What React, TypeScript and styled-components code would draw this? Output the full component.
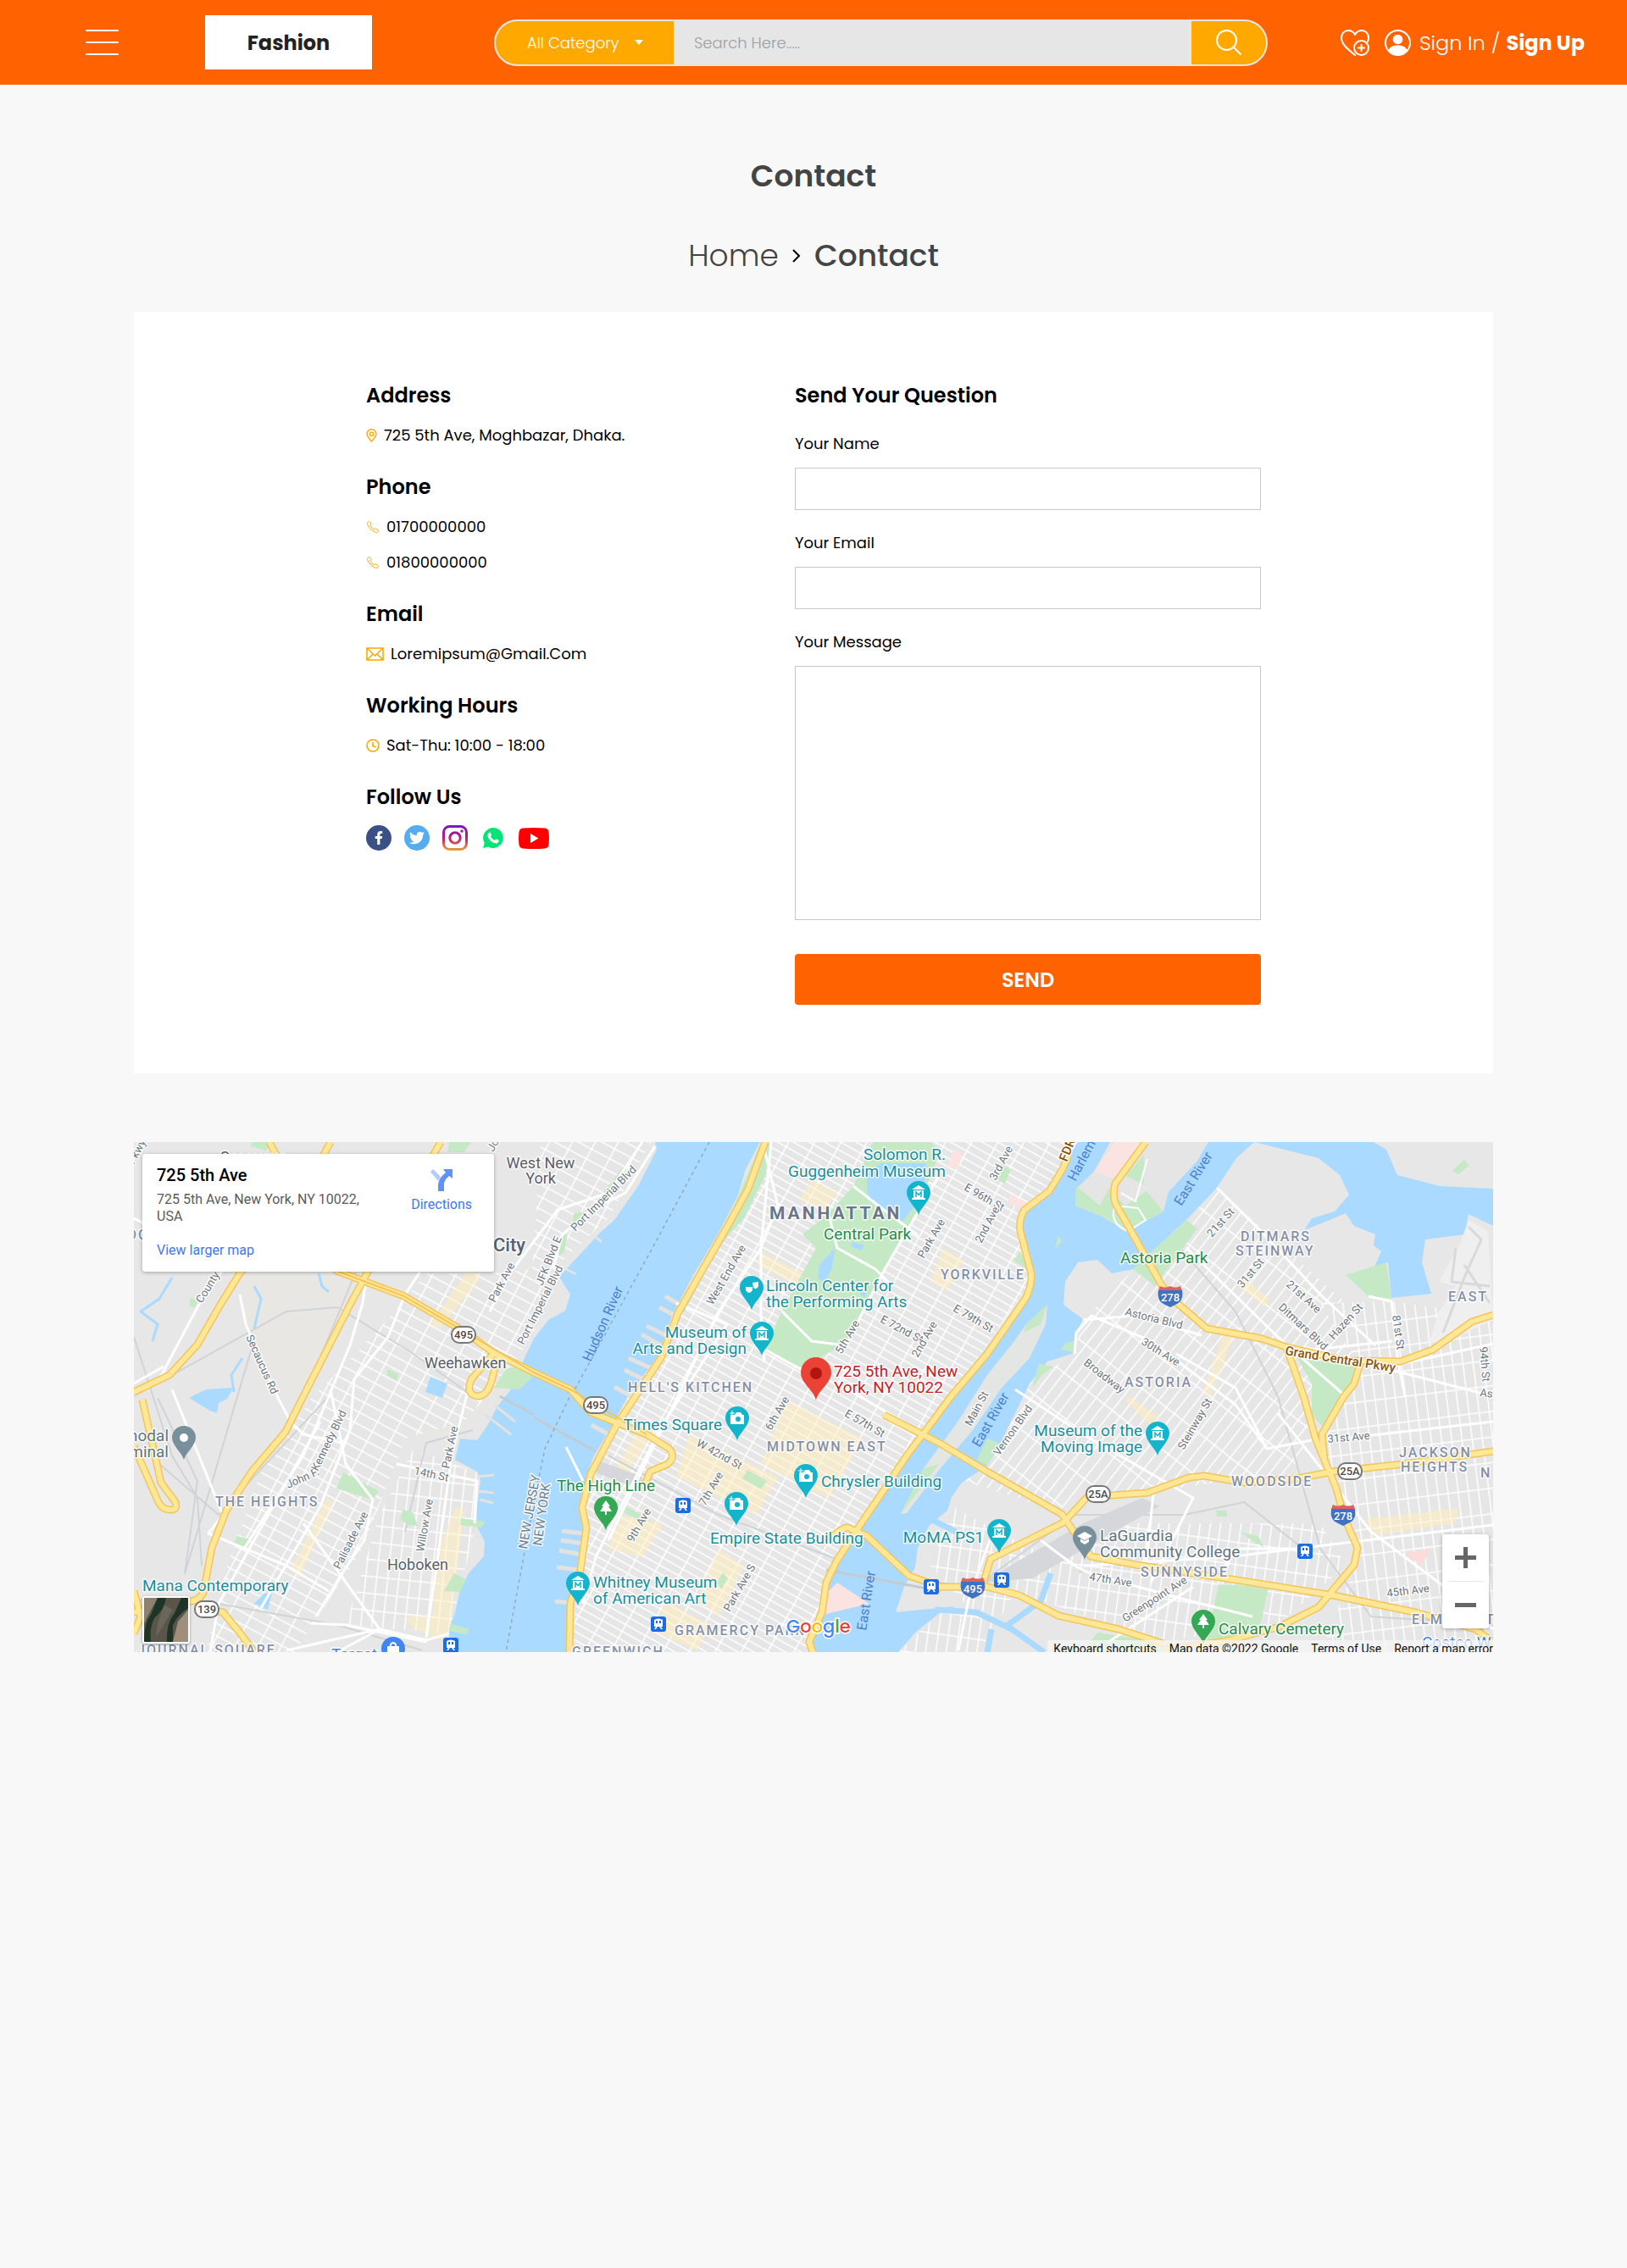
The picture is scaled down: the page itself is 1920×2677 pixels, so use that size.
import React from "react";
import styled, { createGlobalStyle } from "styled-components";
import { IoCallOutline } from "react-icons/io5";
import { FaFacebookF, FaTwitter } from "react-icons/fa";

const GlobalStyle = createGlobalStyle`
  *, *::before, *::after { box-sizing: border-box; }
  body {
    margin: 0;
    background: #f8f8f8;
    color: #000;
    font-family: Poppins, Inter, "Open Sans", sans-serif;
    font-size: 18px;
    line-height: 27px;
  }
  button, input, textarea, select { font: inherit; color: inherit; }
  a { color: inherit; text-decoration: none; }
`;

/* ---------- Header ---------- */

const Header = styled.header`
  display: flex;
  align-items: center;
  min-height: 100px;
  padding: 0 50px 0 101px;
  background: #ff6200;
  color: #fff;
`;

const MenuButton = styled.button`
  display: flex;
  flex-direction: column;
  gap: 12px;
  width: 39px;
  padding: 0;
  border: 0;
  background: none;
  cursor: pointer;
`;

const MenuBar = styled.span`
  height: 2px;
  border-radius: 1px;
  background: #fff;
`;

const Brand = styled.a`
  display: grid;
  place-items: center;
  width: 197px;
  height: 64px;
  margin-left: 102px;
  background: #fff;
  color: #222;
  font-size: 24px;
  font-weight: 700;
`;

const SearchBar = styled.form`
  display: flex;
  flex: 1;
  height: 55px;
  margin: 0 86px 0 144px;
  border: 2px solid #e6e6e6;
  border-radius: 28px;
  background: #e6e6e6;
  overflow: hidden;
`;

const CategoryBox = styled.div`
  position: relative;
  flex: 0 0 210px;
  background: #ffa800;
`;

const CategorySelect = styled.select`
  appearance: none;
  width: 100%;
  height: 100%;
  padding: 0 50px 0 37px;
  border: 0;
  background: none;
  color: #fff;
  font-weight: 300;
`;

const CategoryArrow = styled.svg`
  position: absolute;
  right: 36px;
  top: 22px;
  pointer-events: none;
`;

const SearchInput = styled.input`
  flex: 1;
  min-width: 0;
  padding: 0 24px;
  border: 0;
  outline: 0;
  background: none;
  font-weight: 300;
  &::placeholder { color: #9b9fa3; opacity: 1; }
`;

const SearchButton = styled.button`
  display: grid;
  place-items: center;
  flex: 0 0 88px;
  padding: 0;
  border: 0;
  background: #ffa800;
  cursor: pointer;
`;

const Account = styled.nav`
  display: flex;
  align-items: center;
  font-size: 24px;
  font-weight: 300;
  white-space: nowrap;
`;

const IconLink = styled.a`
  display: flex;
  margin-right: 18px;
`;

const SignLinks = styled.span`
  display: flex;
  gap: 7px;
`;

const SignUpLink = styled.a`
  font-weight: 700;
`;

const UserIcon = styled.svg`
  margin-right: 10px;
`;

/* ---------- Page heading ---------- */

const Main = styled.main`
  padding: 81px 158px;
`;

const Title = styled.h1`
  margin: 0 0 40px;
  color: #444;
  font-size: 36px;
  font-weight: 600;
  line-height: 54px;
  text-align: center;
`;

const Breadcrumb = styled.nav`
  display: flex;
  justify-content: center;
  align-items: center;
  gap: 16px;
  margin-bottom: 39px;
  color: #444;
  font-size: 36px;
  font-weight: 500;
  line-height: 54px;
`;

const HomeLink = styled.a`
  font-weight: 300;
`;

/* ---------- Contact card ---------- */

const Card = styled.section`
  display: grid;
  grid-template-columns: minmax(0, 1fr) 550px;
  padding: 81px 274px;
  background: #fff;
`;

const Details = styled.div`
  display: flex;
  flex-direction: column;
  gap: 30px;
`;

const Group = styled.section`
  display: flex;
  flex-direction: column;
  gap: 15px;
`;

const GroupTitle = styled.h2`
  margin: 0;
  font-size: 24px;
  font-weight: 600;
  line-height: 36px;
`;

const DetailRow = styled.div`
  display: flex;
  align-items: center;
  gap: 8px;
  svg { flex: none; color: #ffa800; }
`;

const Socials = styled.div`
  display: flex;
  align-items: center;
  gap: 15px;
`;

const SocialLink = styled.a<{ $fill?: string; $width?: number }>`
  display: grid;
  place-items: center;
  width: ${(p) => p.$width ?? 30}px;
  height: 30px;
  border-radius: ${(p) => (p.$fill ? "50%" : "0")};
  background: ${(p) => p.$fill ?? "transparent"};
  color: #fff;
`;

const QuestionForm = styled.form`
  display: flex;
  flex-direction: column;
`;

const Field = styled.div`
  display: flex;
  flex-direction: column;
  gap: 15px;
  margin-top: 25px;
`;

const inputBox = `
  width: 100%;
  border: 1px solid #c9c9c9;
  border-radius: 0;
  background: #fff;
  padding: 10px 15px;
  outline: 0;
`;

const TextInput = styled.input`
  ${inputBox}
  height: 50px;
`;

const MessageInput = styled.textarea`
  ${inputBox}
  display: block;
  height: 300px;
  resize: none;
`;

const SendButton = styled.button`
  height: 60px;
  margin-top: 40px;
  border: 0;
  border-radius: 4px;
  background: #ff6200;
  color: #fff;
  font-size: 24px;
  font-weight: 600;
  cursor: pointer;
`;

/* ---------- Map ---------- */

const MapFrame = styled.section`
  position: relative;
  margin-top: 81px;
  aspect-ratio: 1604 / 602;
  overflow: hidden;
  background: #e8e8e8;
  font-family: Roboto, sans-serif;
`;

const MapCanvas = styled.svg`
  display: block;
  width: 100%;
  height: 100%;
`;

const InfoCard = styled.div`
  position: absolute;
  left: 10px;
  top: 14px;
  display: flex;
  justify-content: space-between;
  width: 415px;
  height: 139px;
  padding: 14px 26px 14px 17px;
  border-radius: 3px;
  background: #fff;
  box-shadow: 0 1px 4px rgba(0, 0, 0, 0.3);
  color: #5b5b5b;
  font-size: 16px;
  line-height: 20px;
`;

const InfoText = styled.div`
  display: flex;
  flex-direction: column;
  align-items: flex-start;
  width: 260px;
`;

const InfoTitle = styled.strong`
  margin-bottom: 8px;
  color: #000;
  font-size: 20px;
  font-weight: 500;
  line-height: 22px;
`;

const MapLink = styled.a`
  color: #3c78f0;
`;

const LargerMapLink = styled(MapLink)`
  margin-top: 20px;
`;

const DirectionsLink = styled(MapLink)`
  display: flex;
  flex-direction: column;
  align-items: center;
  gap: 6px;
  padding-top: 4px;
`;

const ZoomControl = styled.div`
  position: absolute;
  right: 5px;
  bottom: 28px;
  display: flex;
  flex-direction: column;
  width: 55px;
  padding: 0 7px;
  border-radius: 3px;
  background: #fff;
  box-shadow: 0 1px 4px rgba(0, 0, 0, 0.3);
`;

const ZoomButton = styled.button`
  display: grid;
  place-items: center;
  height: 55px;
  padding: 0;
  border: 0;
  background: none;
  cursor: pointer;
  & + & { border-top: 1px solid #e6e6e6; height: 56px; }
`;

const Thumbnail = styled.button`
  position: absolute;
  left: 10px;
  bottom: 10px;
  display: flex;
  width: 56px;
  height: 56px;
  padding: 0;
  border: 2px solid #fff;
  border-radius: 3px;
  box-shadow: 0 1px 3px rgba(0, 0, 0, 0.4);
  overflow: hidden;
`;

const Attribution = styled.footer`
  position: absolute;
  right: 0;
  bottom: 0;
  display: flex;
  gap: 15px;
  height: 14px;
  padding-left: 7px;
  background: rgba(245, 245, 245, 0.75);
  color: #111;
  font-size: 14px;
  line-height: 20px;
  white-space: nowrap;
  overflow: hidden;
`;

type LabelKind = "poi" | "park" | "town" | "city" | "area" | "borough" | "road" | "route" | "water" | "state" | "slate" | "shop" | "place";

const labelLook: Record<LabelKind, string> = {
  poi: "font-size: 19px; fill: #1a8f9c;",
  park: "font-size: 19px; fill: #258c4a;",
  town: "font-size: 18px; fill: #59616b;",
  city: "font-size: 22px; font-weight: 500; fill: #59616b;",
  area: "font-size: 16px; font-weight: 500; letter-spacing: 2px; fill: #8590a8;",
  borough: "font-size: 21px; font-weight: 700; letter-spacing: 3px; fill: #6a7688;",
  road: "font-size: 13px; fill: #6e767e;",
  route: "font-size: 15px; font-weight: 500; fill: #87560d;",
  water: "font-size: 16px; fill: #4c7fcf; stroke: none;",
  state: "font-size: 15px; fill: #6e7d92;",
  slate: "font-size: 19px; fill: #60757f;",
  shop: "font-size: 19px; fill: #3d83e6;",
  place: "font-size: 19px; fill: #c5221f;",
};

const MapText = styled.text<{ $kind: LabelKind }>`
  paint-order: stroke;
  stroke: rgba(255, 255, 255, 0.85);
  stroke-width: 3px;
  stroke-linejoin: round;
  ${(p) => labelLook[p.$kind]}
`;

const ShieldText = styled.text<{ $light?: boolean }>`
  font-size: 13px;
  font-weight: 500;
  text-anchor: middle;
  fill: ${(p) => (p.$light ? "#fff" : "#4a4a4a")};
`;

const GoogleMark = styled.text`
  font-family: Poppins, Inter, sans-serif;
  font-size: 21px;
  font-weight: 500;
  paint-order: stroke;
  stroke: #fff;
  stroke-width: 3px;
`;

type Label = [LabelKind, number, number, string, number?, ("end" | "middle")?];

const labels: Label[] = [
  ["area", -8, 115, "OC"], ["town", 102, 24, "Secaucus"],
  ["town", 480, 31, "West New", 0, "middle"], ["town", 480, 49, "York", 0, "middle"],
  ["city", 424, 129, "City"], ["town", 343, 267, "Weehawken"], ["town", 299, 505, "Hoboken"],
  ["slate", 41, 353, "modal", 0, "end"], ["slate", 41, 372, "Terminal", 0, "end"],
  ["area", 96, 430, "THE HEIGHTS"], ["area", 4, 605, "JOURNAL SQUARE"],
  ["poi", 10, 530, "Mana Contemporary"], ["shop", 233, 611, "Target"],
  ["poi", 958, 21, "Solomon R.", 0, "end"], ["poi", 958, 41, "Guggenheim Museum", 0, "end"],
  ["borough", 750, 91, "MANHATTAN"], ["park", 814, 115, "Central Park"],
  ["poi", 746, 176, "Lincoln Center for"], ["poi", 746, 195, "the Performing Arts"],
  ["poi", 723, 231, "Museum of", 0, "end"], ["poi", 723, 250, "Arts and Design", 0, "end"],
  ["area", 583, 295, "HELL'S KITCHEN"], ["area", 747, 365, "MIDTOWN EAST"],
  ["area", 638, 582, "GRAMERCY PARK"], ["area", 517, 607, "GREENWICH"],
  ["poi", 694, 340, "Times Square", 0, "end"], ["park", 499, 412, "The High Line"],
  ["poi", 811, 407, "Chrysler Building"], ["poi", 680, 474, "Empire State Building"],
  ["poi", 542, 526, "Whitney Museum"], ["poi", 542, 545, "of American Art"],
  ["poi", 1003, 473, "MoMA PS1", 0, "end"],
  ["poi", 1190, 347, "Museum of the", 0, "end"], ["poi", 1190, 366, "Moving Image", 0, "end"],
  ["slate", 1140, 471, "LaGuardia"], ["slate", 1140, 490, "Community College"],
  ["park", 1280, 581, "Calvary Cemetery"], ["park", 1164, 143, "Astoria Park"],
  ["area", 952, 162, "YORKVILLE"], ["area", 1306, 117, "DITMARS"], ["area", 1300, 134, "STEINWAY"],
  ["area", 1551, 188, "EAST"], ["area", 1169, 289, "ASTORIA"], ["area", 1295, 406, "WOODSIDE"],
  ["area", 1493, 372, "JACKSON"], ["area", 1495, 389, "HEIGHTS"], ["area", 1589, 396, "N"],
  ["area", 1188, 513, "SUNNYSIDE"], ["area", 1508, 569, "ELMHURST"], ["shop", 1520, 597, "Costco W"],
  ["road", 0, 27, "Pkwy", -62], ["road", 132, 230, "Secaucus Rd", 66], ["road", 80, 191, "County Ave", -58],
  ["road", 424, 12, "John", -60],
  ["road", 426, 190, "Park Ave", -62], ["road", 460, 240, "Port Imperial Blvd", -63],
  ["road", 482, 170, "JFK Blvd E", -68], ["road", 521, 106, "Port Imperial Blvd", -45],
  ["road", 683, 193, "West End Ave", -60], ["road", 835, 251, "5th Ave", -60],
  ["road", 880, 212, "E 72nd St", 28], ["road", 925, 255, "2nd Ave", -60], ["road", 932, 138, "Park Ave", -60],
  ["road", 1017, 46, "3rd Ave", -62], ["road", 979, 56, "E 96th St", 30], ["road", 1000, 120, "2nd Ave", -62],
  ["road", 966, 199, "E 79th St", 30], ["road", 1272, 113, "21st St", -48], ["road", 1308, 173, "31st St", -50],
  ["road", 1359, 169, "21st Ave", 42], ["road", 1350, 196, "Ditmars Blvd", 43], ["road", 1416, 234, "Hazen St", -48],
  ["road", 1485, 205, "81st St", 82], ["road", 1588, 242, "94th St", 85], ["road", 1169, 204, "Astoria Blvd", 14],
  ["road", 1188, 238, "30th Ave", 32], ["road", 1120, 262, "Broadway", 38], ["road", 988, 336, "Main St", -62],
  ["road", 1021, 371, "Vernon Blvd", -55], ["road", 1239, 364, "Steinway St", -60], ["road", 1409, 355, "31st Ave", -5],
  ["road", 1127, 517, "47th Ave", 9], ["road", 1170, 567, "Greenpoint Ave", -33], ["road", 1479, 537, "45th Ave", -7],
  ["road", 1588, 300, "Ast", 6], ["road", 752, 341, "6th Ave", -60], ["road", 838, 323, "E 57th St", 30],
  ["road", 663, 358, "W 42nd St", 29], ["road", 674, 430, "7th Ave", -60], ["road", 589, 473, "9th Ave", -60],
  ["road", 703, 555, "Park Ave S", -60], ["road", 182, 409, "John F.", -24], ["road", 217, 389, "Kennedy Blvd", -64],
  ["road", 372, 386, "Park Ave", -78], ["road", 330, 392, "14th St", 12], ["road", 342, 484, "Willow Ave", -80],
  ["road", 243, 505, "Palisade Ave", -63],
  ["route", 1101, 24, "FDR", -68], ["route", 1358, 251, "Grand Central Pkwy", 9],
  ["water", 539, 260, "Hudson River", -66], ["water", 1111, 47, "Harlem R", -62], ["water", 1236, 76, "East River", -58],
  ["water", 998, 361, "East River", -60], ["water", 864, 577, "East River", -81],
  ["state", 464, 481, "NEW JERSEY", -80], ["state", 481, 477, "NEW YORK", -82],
  ["place", 826, 277, "725 5th Ave, New"], ["place", 826, 296, "York, NY 10022"],
];

const highways = [
  "M0 295 L42 275 L75 239 L102 192 L125 155 L200 60 L232 0",
  "M362 0 L275 155 L255 192 L199 302 L179 342 L139 389 L109 435 L92 479 L82 532 Q75 545 55 542 L25 552 L0 555",
  "M160 0 L239 152 L319 182 L392 225 L425 249 L472 272 L515 292 L539 319 L605 345 L632 362 Q640 372 630 380 L609 389 L604 402",
  "M425 249 L399 279 Q390 297 405 300 Q417 300 422 282 L430 252",
  "M745 0 L725 55 L699 102 L672 149 L642 202 L622 255 L592 300 L569 335 L539 392 L529 432 L534 455 L527 505 L515 545 L514 602",
  "M1103 15 L1096 32 L1080 58 L1051 80 Q1044 92 1046 105 L1059 155 Q1060 170 1052 185 L1007 250 L963 302 L935 340 L912 370 L889 405 L855 455 L829 495 L817 520 L812 555 L797 590 L801 602",
  "M1194 0 L1158 49 Q1155 60 1158 72 L1213 169 L1230 189 L1266 220 L1331 232 L1360 242 L1430 258 L1495 259 L1533 245 L1579 212 L1604 204",
  "M1360 242 L1381 302 L1394 349 L1419 409 L1428 442 L1444 479 L1440 499 L1398 549 L1352 572 L1289 589 L1213 600",
  "M1447 262 L1440 285 L1428 300 L1402 345 L1405 375",
  "M820 470 Q835 455 842 455 L865 465 L915 512 L952 525 L1007 525 L1045 535 L1091 559 L1162 575 L1215 592",
  "M885 322 L952 356 L1007 389 L1095 439 L1129 489 L1183 499 L1289 515 L1415 535 L1512 555 L1583 575 L1604 590",
  "M1002 522 L1011 492 L1097 449 L1125 419 L1196 414 L1245 396 L1263 394 L1310 402 L1373 397 L1415 389 L1499 380 L1604 365",
  "M10 304 L32 402 L49 425 Q52 435 42 434 Q34 434 29 425 L0 359",
  "M75 549 L105 555 L125 579 L142 602",
  "M0 530 L8 560 L0 580",
];

const streets = [
  "M742 0 L760 75 L740 125 L740 205 L744 260", "M752 0 L740 125 L690 200 L560 470",
  "M785 267 L840 290 L890 320", "M745 245 L785 267", "M840 240 L885 152 L950 40",
  "M849 52 L885 80 L925 110", "M820 85 L830 125 L875 150 L890 165", "M765 200 L800 235 L839 240",
  "M1278 54 L1330 105 L1400 180 L1465 240", "M1242 125 L1350 230 L1430 300", "M1120 210 L1180 205 L1260 228",
  "M1110 250 L1112 225 L1130 205 L1200 235 L1300 310 L1337 362 L1390 352",
  "M1040 292 L1120 345 L1250 420 L1200 520", "M1337 362 L1300 290 L1230 250", "M1350 320 L1460 460 L1540 520 L1604 575",
  "M1120 500 L1290 490 L1604 452", "M1070 470 L1110 500 L1130 510 L1240 540 L1320 560", "M1425 350 L1604 330",
  "M1457 182 L1484 188 L1492 260 L1500 300", "M1392 245 L1485 235 M1495 262 L1604 238", "M1380 242 L1604 300",
  "M1250 525 L1150 590", "M1204 405 L1195 495", "M973 600 L985 540 L1010 470", "M1280 520 L1300 480 L1370 480",
  "M30 280 L75 195 L105 150 L60 120 L0 90", "M125 180 L132 215 L170 302 L185 330 L200 345 L245 355",
  "M45 292 L105 440 L88 462 L180 500 L230 530", "M232 292 L250 380 L282 422 L272 470 L245 510 L215 560",
  "M275 155 L270 190 L255 240 L230 300 L200 370 L130 480", "M425 20 L320 180 L300 230 L260 280 L255 340 L220 430 L150 550",
  "M395 290 L375 370 L360 480 L345 585", "M310 380 L405 400 L402 450", "M200 450 L290 575 L180 600", "M345 590 L250 570 L210 568",
  "M240 602 L290 575 L345 588 L372 580", "M600 0 L560 60 L500 80 L440 160 L420 200", "M615 5 L580 60 L540 80 L505 110 L495 150",
  "M0 285 L35 265", "M90 602 L100 545 L220 330", "M510 360 L530 400", "M640 190 L700 215 L620 340 L545 490 L530 545",
];

type PinIcon = "museum" | "camera" | "tree" | "mask" | "cap" | "dot";
const pins: [number, number, string, PinIcon][] = [
  [926, 86, "#12b5cb", "museum"], [729, 198, "#12b5cb", "mask"], [741, 252, "#12b5cb", "museum"],
  [712, 352, "#12b5cb", "camera"], [793, 420, "#12b5cb", "camera"], [711, 453, "#12b5cb", "camera"],
  [557, 458, "#34a853", "tree"], [524, 547, "#12b5cb", "museum"], [1021, 485, "#12b5cb", "museum"],
  [1208, 370, "#12b5cb", "museum"], [1122, 493, "#78909c", "cap"], [1262, 592, "#34a853", "tree"],
  [59, 375, "#78909c", "dot"],
];

const pinGlyphs: Record<PinIcon, React.ReactNode> = {
  museum: <g><path d="M-8 -30 L0 -35 L8 -30 Z M-6 -29 H6 V-20 H-6 Z M-8 -20 H8 V-18 H-8 Z" fill="#fff" /><path d="M-3 -21 V-27 L0 -23.5 L3 -27 V-21" fill="none" stroke="#12b5cb" strokeWidth="1.5" /></g>,
  camera: <g><path d="M-8 -30 H-3 L-1 -33 H4 L6 -30 H8 V-19 H-8 Z" fill="#fff" /><circle cx="1" cy="-25" r="3" fill="#12b5cb" /><path d="M-6 -35 V-29 M-9 -32 H-3" stroke="#fff" strokeWidth="1" /></g>,
  tree: <path d="M0 -35 L5 -28 H3 L7 -22 H1 V-18 H-1 V-22 H-7 L-3 -28 H-5 Z" fill="#fff" />,
  mask: <g fill="#fff"><path d="M-7 -27 H1 V-23 Q-3 -17 -7 -23 Z" /><path d="M1 -32 L8 -33 V-28 Q6 -23 2 -26 Z" /></g>,
  cap: <g fill="#fff"><path d="M-9 -28 L0 -33 L9 -28 L0 -23 Z" /><path d="M-5 -25 L0 -22 L5 -25 V-21 L0 -18 L-5 -21 Z" /></g>,
  dot: <circle cx="0" cy="-26" r="5" fill="#fff" />,
};

const stateShields: [number, number, string][] = [
  [389, 228, "495"], [545, 311, "495"], [86, 552, "139"], [1138, 416, "25A"], [1435, 389, "25A"],
];
const interstates: [number, number, string][] = [[1223, 182, "278"], [1427, 440, "278"], [990, 526, "495"]];
const stations: [number, number][] = [[648, 429], [619, 569], [941, 525], [1382, 483], [1024, 517], [374, 594]];

const grids: { id: string; angle: number; w: number; h: number }[] = [
  { id: "manhattan", angle: 29, w: 27, h: 9 },
  { id: "heights", angle: 28, w: 24, h: 13 },
  { id: "hoboken", angle: 6, w: 13, h: 20 },
  { id: "astoria", angle: 38, w: 12, h: 42 },
  { id: "queens", angle: -7, w: 12, h: 30 },
  { id: "sunnyside", angle: 8, w: 12, h: 26 },
];

const gridAreas: [string, string][] = [
  ["manhattan", "M752 0 H1114 L1078 59 L1048 85 L1059 165 L963 302 L889 402 L817 519 L800 602 H514 L534 455 L529 425 L582 302 L640 205 L712 80 Z"],
  ["heights", "M345 155 H425 L470 150 L480 0 H610 L560 90 L505 140 L470 230 L425 290 L390 330 L320 350 L270 480 L190 602 H85 L110 500 L150 390 L210 302 L290 220 Z"],
  ["hoboken", "M330 362 L405 390 L404 452 L372 580 L250 570 L290 440 Z"],
  ["astoria", "M1278 54 L1430 190 L1480 240 L1400 300 L1370 390 L1200 412 L1125 415 L1090 435 L980 400 L1021 359 L1057 285 L1110 249 L1120 209 L1180 150 Z"],
  ["queens", "M1400 190 L1484 188 L1604 205 V602 H1400 L1450 480 L1394 349 L1447 265 Z"],
  ["sunnyside", "M965 430 L1060 480 L1180 450 H1400 L1430 500 L1350 570 L1210 590 L1040 530 L1000 602 H902 L952 555 H990 L940 500 Z"],
];

const parks = [
  "M872 0 H940 L952 10 L919 95 L885 152 L839 239 L785 267 L745 245 L762 205 L805 125 L789 109 L819 85 L849 52 Z",
  "M752 0 L745 40 L720 90 L700 112 L680 140 L650 200 L640 200 L700 95 L740 0 Z",
  "M1242 92 L1255 102 L1205 170 L1179 150 Z", "M1430 157 L1478 142 L1484 185 L1457 182 Z",
  "M1373 255 L1447 265 L1428 302 L1402 335 L1390 322 L1390 285 Z", "M1280 522 L1339 525 L1327 582 L1266 589 Z",
  "M1137 579 L1204 589 L1213 602 H1120 Z", "M439 268 L460 263 L470 278 L455 292 L425 290 Z",
  "M247 390 L289 412 L282 422 L239 409 Z", "M122 465 L137 469 L132 482 L117 475 Z",
  "M317 434 L329 437 L335 453 L324 452 L315 446 Z", "M378 509 L392 516 L385 531 L366 530 Z", "M374 568 L395 575 L393 581 L372 577 Z",
  "M386 444 L415 448 L410 455 L385 452 Z", "M1021 26 L1035 32 L1028 49 L1019 44 Z", "M724 387 L747 400 L740 410 L718 397 Z",
  "M580 430 L600 440 L595 446 L578 437 Z", "M695 508 L701 515 L693 528 L688 520 Z", "M140 0 H165 L155 10 L138 5 Z",
  "M372 0 H398 L390 12 H370 Z", "M577 30 L582 32 L560 60 L552 62 Z", "M504 110 L512 108 L508 130 L500 135 Z",
  "M519 85 L530 82 L526 92 L518 95 Z", "M1570 20 L1575 28 L1563 38 L1556 34 Z", "M1305 460 L1327 465 L1333 478 L1322 472 Z",
  "M1277 435 H1290 V442 H1278 Z", "M1112 500 L1122 504 L1117 510 Z", "M66 183 L75 187 L72 196 L66 193 Z",
  "M1045 130 L1057 140 L1058 152 L1038 140 Z", "M1085 265 L1072 275 L1060 290 L1068 262 Z", "M1100 237 L1110 235 L1110 248 L1094 245 Z",
  "M300 268 L312 274 L310 282 L298 275 Z", "M1007 350 L1021 356 L1007 382 L995 375 Z",
];

const commercial = [
  "M800 45 L830 60 L815 80 L785 68 Z", "M740 130 L790 155 L785 170 L735 145 Z", "M655 345 L760 395 L735 440 L640 395 Z",
  "M770 305 L860 350 L820 420 L740 380 Z", "M560 400 L600 330 L615 340 L570 410 Z", "M690 480 L720 500 L690 560 L665 540 Z",
  "M360 480 L380 430 L390 435 L370 590 L330 575 L320 560 L352 560 Z", "M228 420 L235 425 L195 515 L185 505 Z",
  "M395 150 L410 160 L360 220 L350 215 Z", "M1455 445 L1563 432 L1560 450 L1460 465 Z", "M1287 222 L1298 228 L1290 250 L1270 300 L1262 295 Z",
  "M955 125 L980 140 L960 175 L940 165 Z", "M570 440 L625 450 L600 490 L560 480 Z", "M1310 160 L1340 185 L1335 195 L1305 172 Z",
  "M1175 300 L1210 325 L1200 335 L1170 305 Z", "M625 540 L680 570 L665 600 L620 580 Z",
];

function ManhattanMap() {
  return (
    <MapCanvas viewBox="0 0 1604 602" preserveAspectRatio="xMidYMid slice" role="img" aria-label="Map of New York around 725 5th Ave">
      <defs>
        {grids.map((g) => (
          <pattern key={g.id} id={g.id} width={g.w} height={g.h} patternUnits="userSpaceOnUse" patternTransform={`rotate(${g.angle})`}>
            <rect width={g.w} height={g.h} fill="#e6e6e7" />
            <path d={`M0 0 H${g.w} M0 0 V${g.h}`} stroke="#fff" strokeWidth="3" />
          </pattern>
        ))}
      </defs>
      <rect width="1604" height="602" fill="#e7e7e7" />
      <path d="M125 155 H250 L265 190 L190 302 L150 295 L132 215 Z M430 300 L385 345 L340 350 L300 330 L320 200 L420 190 L440 270 Z" fill="#e9e7e3" />
      {gridAreas.map(([id, d]) => <path key={id} d={d} fill={`url(#${id})`} />)}
      {commercial.map((d) => <path key={d} d={d} fill="#ffedb8" opacity="0.5" />)}
      <g fill="none" stroke="#d0d3d7" strokeWidth="2">
        <path d="M0 230 L45 370 L75 420 L80 500 M28 302 L75 400 L60 510 L140 240 M200 302 L280 110 M0 300 L180 200 L240 195 L330 250 L400 300" />
        <path d="M30 380 L100 440 L230 300 M320 460 L345 355 L400 340 M0 540 L100 545 L240 570 L340 600 M560 370 L690 440 L850 500 L1000 530" />
        <path d="M1195 0 L1200 80 L1230 120 L1300 200 L1350 300 L1400 480 L1460 560 L1604 570 M1000 520 L1110 440 L1240 440 L1310 425 L1380 480" />
      </g>
      <path d="M1000 520 L1120 450 L1190 420 L1210 430 L1060 515 Z M545 375 L600 395 L600 412 L545 390 Z" fill="#d5d7da" />
      <g fill="#aadaff">
        <path d="M615 0 L617 9 L595 52 L567 92 L550 107 L515 145 L502 159 L515 180 L509 199 L489 210 L472 232 L460 257 L445 292 L429 312 L417 335 L405 352 L385 350 L379 375 L405 389 L409 399 L405 429 L404 452 L414 472 L413 489 L395 509 L385 529 L379 555 L372 575 V602 H511 L514 549 L525 509 L530 465 L527 425 L534 395 L542 372 L560 342 L582 302 L619 252 L635 205 L659 159 L689 109 L712 65 L722 32 L739 0 Z" />
        <path d="M1114 0 L1099 22 L1078 59 L1051 79 L1045 102 L1059 155 L1053 179 L1007 242 L965 302 L932 342 L889 402 L855 455 L829 492 L817 519 L812 559 L800 589 L805 602 H902 L922 579 L952 555 L970 548 L899 555 L909 525 L922 502 L925 479 L939 452 L960 435 L965 419 L977 402 L1007 382 L1021 359 L1057 285 L1078 259 L1110 249 L1112 225 L1120 209 L1097 192 L1099 165 L1114 142 L1137 139 L1154 155 L1179 150 L1242 92 L1278 54 L1301 19 L1322 0 Z" />
        <path d="M1318 0 L1322 0 L1398 19 L1423 39 L1434 62 L1417 82 L1390 90 L1381 104 L1411 92 L1430 84 L1440 99 L1465 109 L1463 122 L1472 129 L1463 150 L1480 142 L1484 184 L1531 179 L1520 142 L1524 115 L1571 109 L1575 85 L1604 99 V55 L1541 52 L1491 39 L1478 9 L1463 0 Z" />
        <path d="M350 277 L370 285 L364 302 L344 295 Z M153 533 L163 532 L158 552 L142 545 Z M65 302 L85 292 L118 290 L110 303 L100 308 L98 320 L88 316 Z" />
      </g>
      {parks.map((d) => <path key={d} d={d} fill="#c6e9c5" />)}
      <g fill="#aadaff">
        <path d="M865 35 L882 25 L935 25 L932 65 L905 95 L872 72 L865 59 Z" />
        <path d="M827 125 L824 149 L815 167 L807 160 L809 145 Z M848 118 L862 122 L858 128 L846 123 Z M856 178 L866 175 L862 184 Z" />
      </g>
      <g fill="none" stroke="#aadaff" strokeWidth="7" strokeLinejoin="round">
        <path d="M945 552 L994 555 L1036 575 L1074 602 M1030 571 L1070 542 L1082 509" />
        <path d="M1007 602 L1012 575 M940 445 L970 460" />
        <path d="M142 170 L150 185 L142 220 M128 255 L115 275 L118 295 M45 160 L30 185 L8 200 L28 215 L22 235 M218 155 L222 170 L230 177" strokeWidth="3" />
      </g>
      <path d="M1152 0 L1133 35 L1112 55 L1111 75 L1141 87 L1171 105 L1196 92 L1215 82 L1221 59 L1255 22 L1268 0 Z" fill="#e5e5e6" />
      <path d="M1112 52 L1140 75 L1150 55 L1170 75 L1195 58 L1215 82 L1171 105 L1141 87 L1111 75 Z M1170 40 L1192 15 V50 Z" fill="#c6e9c5" />
      <path d="M1158 0 H1190 L1162 45 L1133 35 Z M1035 62 L1060 75 L1052 80 L1030 72 Z M968 8 L978 15 L972 32 L960 28 Z M868 545 L812 558 L810 540 L830 520 Z" fill="#fbe3e1" />
      <path d="M1500 485 L1530 480 L1520 500 Z" fill="#fbdcda" />
      <path d="M1158 75 Q1150 95 1172 105 M1158 75 L1185 78 L1194 92 L1174 105 M1165 60 L1182 70 L1196 20" fill="none" stroke="#fff" strokeWidth="2" />
      <path d="M1078 192 L1053 215 L1036 239 L1007 275 L973 329 L932 385 L905 439 L912 438 L952 385 L990 340 L1024 290 L1057 255 L1076 215 Z" fill="#e4e6e4" />
      <path d="M1078 192 L1053 215 L1050 225 L1070 215 Z M932 385 L905 439 L950 380 Z M1091 110 L1095 118 L1087 125 Z" fill="#c6e9c5" />
      <path d="M1575 92 L1598 105 L1604 210 L1560 230 L1528 238 L1540 200 L1560 170 L1540 165 L1565 120 Z" fill="#efeff0" />
      <g fill="none" stroke="#d9d9db" strokeWidth="3"><path d="M1575 100 L1590 115 L1570 160 L1545 225 M1560 125 L1555 165 L1600 170 M1570 145 L1600 190" /></g>
      <g stroke="#e3e2df" strokeWidth="5">
        <path d="M567 289 L585 299 M579 269 L605 282 M584 255 L615 269 M599 227 L622 240 M605 217 L632 230 M620 195 L639 205 M627 182 L644 192" />
        <path d="M505 459 L530 462 M504 470 L530 474 M502 482 L529 487 M499 502 L526 505 M497 542 L514 544 M540 334 L562 346" />
        <path d="M545 112 L552 118 M510 150 L522 156 M405 395 L425 393 M405 412 L425 414 M408 422 L424 426 M425 310 L450 330 M415 322 L445 345" strokeWidth="3" />
      </g>
      <path d="M472 325 L545 365 M432 300 L472 322 M817 505 L952 530" stroke="#c3cbd2" strokeWidth="3" fill="none" />
      <path d="M679 0 L619 112 L522 289 L515 299 L485 362 L472 425 L439 602" fill="none" stroke="#8faac0" strokeWidth="1.5" strokeDasharray="4 4" />
      <g fill="none" stroke="#fff" strokeWidth="3" strokeLinejoin="round">
        {streets.map((d) => <path key={d} d={d} />)}
      </g>
      <g fill="none" strokeLinejoin="round">
        {highways.map((d) => <path key={d} d={d} stroke="#f2c55c" strokeWidth="9" />)}
        {highways.map((d) => <path key={d} d={d} stroke="#ffe795" strokeWidth="6" />)}
        <path d="M239 152 L319 182 L392 225 L472 272 L515 292 L605 345" stroke="#f2c55c" strokeWidth="2" />
      </g>

      {labels.map(([kind, x, y, text, angle = 0, anchor]) => (
        <MapText key={`${text}${x}${y}`} $kind={kind} textAnchor={anchor} transform={`translate(${x} ${y}) rotate(${angle})`}>{text}</MapText>
      ))}

      {stateShields.map(([x, y, text]) => (
        <g key={`${x}`} transform={`translate(${x} ${y})`}>
          <rect x="-14" y="-10" width="28" height="19" rx="9" fill="#fff" stroke="#777" strokeWidth="2" />
          <ShieldText y="4">{text}</ShieldText>
        </g>
      ))}
      {interstates.map(([x, y, text]) => (
        <g key={`${x}`} transform={`translate(${x} ${y})`}>
          <path d="M-14 -7 H14 Q16 5 8 9 L0 13 L-8 9 Q-16 5 -14 -7 Z" fill="#3f72c4" />
          <path d="M-14 -7 L-12 -12 Q-6 -9 0 -12 Q6 -9 12 -12 L14 -7 Z" fill="#e0605c" />
          <ShieldText $light y="6">{text}</ShieldText>
        </g>
      ))}
      {stations.map(([x, y]) => (
        <g key={`${x}`} transform={`translate(${x} ${y})`}>
          <rect x="-9" y="-9" width="18" height="18" rx="3" fill="#1a6ce8" />
          <path d="M-5 -5 Q0 -8 5 -5 V3 H3 L5 6 H3 L1 3 H-1 L-3 6 H-5 L-3 3 H-5 Z" fill="#fff" />
          <path d="M-3 -4 H-1 V-1 H-3 Z M1 -4 H3 V-1 H1 Z" fill="#1a6ce8" />
        </g>
      ))}
      {pins.map(([x, y, color, icon]) => (
        <g key={`${x}${y}`} transform={`translate(${x} ${y})`}>
          <path d="M0 0 C-2 -8 -14 -17 -14 -26 A14 14 0 0 1 14 -26 C14 -17 2 -8 0 0 Z" fill={color} />
          {pinGlyphs[icon]}
        </g>
      ))}
      <g transform="translate(306 598)">
        <circle r="14" fill="#4285f4" />
        <path d="M-7 -3 H7 V8 H-7 Z" fill="#fff" />
        <path d="M-3 -1 V-5 Q0 -9 3 -5 V-1" fill="none" stroke="#fff" strokeWidth="2" />
      </g>
      <g transform="translate(805 305)">
        <path d="M0 0 C-2 -12 -18 -20 -18 -33 A18 18 0 0 1 18 -33 C18 -20 2 -12 0 0 Z" fill="#ea4335" />
        <circle cy="-32" r="7" fill="#b31412" />
      </g>
      <GoogleMark x="770" y="579">
        <tspan fill="#4285f4">G</tspan><tspan fill="#ea4335">o</tspan><tspan fill="#fbbc04">o</tspan><tspan fill="#4285f4">g</tspan><tspan fill="#34a853">l</tspan><tspan fill="#ea4335">e</tspan>
      </GoogleMark>
    </MapCanvas>
  );
}

/* ---------- Icons ---------- */

const SearchIcon = () => (
  <svg width="30" height="30" viewBox="0 0 30 30" fill="none" stroke="#fff" strokeWidth="2" strokeLinecap="round">
    <circle cx="12.5" cy="12.5" r="11.5" /><path d="M20.5 20.5 L29 29" />
  </svg>
);

const HeartPlusIcon = () => (
  <svg width="34" height="31" viewBox="0 0 34 31" fill="none" stroke="#fff" strokeWidth="2" strokeLinecap="round" strokeLinejoin="round">
    <path d="M17 30 C10 24 1 18 1 9.5 C1 4.5 4.5 1 9 1 C12.5 1 15.5 3 17 6 C18.5 3 21.5 1 25 1 C29.5 1 33 4.5 33 9.5 Q33 12 32 14" />
    <circle cx="24.5" cy="21.5" r="8.5" /><path d="M24.5 18 V25 M21 21.5 H28" />
  </svg>
);

const PinIconSmall = () => (
  <svg width="13" height="16" viewBox="0 0 13 16" fill="none" stroke="currentColor" strokeWidth="1.4">
    <path d="M6.5 15 C3 11 1 9 1 6.3 A5.5 5.5 0 0 1 12 6.3 C12 9 10 11 6.5 15 Z" /><circle cx="6.5" cy="6.3" r="2.2" />
  </svg>
);

const EnvelopeIcon = () => (
  <svg width="21" height="16" viewBox="0 0 21 16" fill="none" stroke="currentColor" strokeWidth="1.6">
    <path d="M1 1 H20 V15 H1 Z M1 1 L10.5 10 L20 1 M1 15 L8 8 M20 15 L13 8" />
  </svg>
);

const ClockIcon = () => (
  <svg width="16" height="16" viewBox="0 0 16 16" fill="none" stroke="currentColor" strokeWidth="1.6">
    <circle cx="8" cy="8" r="7" /><path d="M8 4 V8.5 L11.5 10" />
  </svg>
);

const InstagramIcon = () => (
  <svg width="30" height="30" viewBox="0 0 30 30" fill="none" stroke="url(#insta)" strokeWidth="3">
    <defs>
      <linearGradient id="insta" gradientUnits="userSpaceOnUse" x1="15" y1="0" x2="15" y2="30">
        <stop offset="0" stopColor="#6c1cd0" /><stop offset="0.5" stopColor="#c2187a" /><stop offset="1" stopColor="#e5a33c" />
      </linearGradient>
    </defs>
    <rect x="1.5" y="1.5" width="27" height="27" rx="7" /><circle cx="15" cy="15" r="6.2" />
    <circle cx="23" cy="7" r="1.7" fill="#a11a9a" stroke="none" />
  </svg>
);

const WhatsappIcon = () => (
  <svg width="26" height="26" viewBox="0 0 26 26">
    <path d="M13 1 A12 12 0 1 1 7 23.5 L1 25 L2.7 19 A12 12 0 0 1 13 1 Z" fill="#00e676" />
    <path d="M8.5 6.5 C9.3 6.3 9.8 6.5 10 7 L11 9.5 C11.1 10 10 11 10 11.3 C11.2 13.6 12.8 14.9 15 15.8 C15.5 15.9 16.5 14.2 17 14.3 L19.7 15.7 C20 18.5 17.5 19.7 15.5 19.3 C10.8 18.3 7.5 15 6.5 10.7 C6.3 9 7 7.3 8.5 6.5 Z" fill="#fff" />
  </svg>
);

const YoutubeIcon = () => (
  <svg width="36" height="25" viewBox="0 0 36 25">
    <path d="M5 .6 Q18 -.4 31 .6 Q35 1 35.5 5 Q36.4 12.5 35.5 20 Q35 24 31 24.4 Q18 25.4 5 24.4 Q1 24 .5 20 Q-.4 12.5 .5 5 Q1 1 5 .6 Z" fill="#f00" />
    <path d="M14 7 L23.5 12.5 L14 18 Z" fill="#fff" />
  </svg>
);

export default function App() {
  return (
    <>
      <GlobalStyle />
      <Header>
        <MenuButton type="button" aria-label="Open menu"><MenuBar /><MenuBar /><MenuBar /></MenuButton>
        <Brand href="#">Fashion</Brand>
        <SearchBar role="search">
          <CategoryBox>
            <CategorySelect aria-label="Category"><option>All Category</option></CategorySelect>
            <CategoryArrow width="10" height="6" viewBox="0 0 10 6" fill="#fff"><path d="M0 0 H10 L5 6 Z" /></CategoryArrow>
          </CategoryBox>
          <SearchInput type="text" aria-label="Search" placeholder="Search Here....." />
          <SearchButton type="button" aria-label="Search"><SearchIcon /></SearchButton>
        </SearchBar>
        <Account aria-label="Account">
          <IconLink href="#" aria-label="Wishlist"><HeartPlusIcon /></IconLink>
          <UserIcon width="31" height="31" viewBox="0 0 31 31">
            <circle cx="15.5" cy="15.5" r="14.5" fill="none" stroke="#fff" strokeWidth="2" />
            <circle cx="15.5" cy="11.5" r="5.8" fill="#fff" />
            <path d="M4.5 24.5 C6 20 10 18.5 15.5 18.5 C21 18.5 25 20 26.5 24.5 A14 14 0 0 1 4.5 24.5 Z" fill="#fff" />
          </UserIcon>
          <SignLinks>
            <a href="#">Sign In</a><span>/</span><SignUpLink href="#">Sign Up</SignUpLink>
          </SignLinks>
        </Account>
      </Header>

      <Main>
        <Title>Contact</Title>
        <Breadcrumb aria-label="Breadcrumb">
          <HomeLink href="#">Home</HomeLink>
          <svg width="10" height="16" viewBox="0 0 10 16" fill="none" stroke="#000" strokeWidth="2"><path d="M1 1 L8 8 L1 15" /></svg>
          <span>Contact</span>
        </Breadcrumb>

        <Card>
          <Details>
            <Group>
              <GroupTitle>Address</GroupTitle>
              <DetailRow><PinIconSmall />725 5th Ave, Moghbazar, Dhaka.</DetailRow>
            </Group>
            <Group>
              <GroupTitle>Phone</GroupTitle>
              <DetailRow><IoCallOutline size={16} />01700000000</DetailRow>
              <DetailRow><IoCallOutline size={16} />01800000000</DetailRow>
            </Group>
            <Group>
              <GroupTitle>Email</GroupTitle>
              <DetailRow><EnvelopeIcon />Loremipsum@Gmail.Com</DetailRow>
            </Group>
            <Group>
              <GroupTitle>Working Hours</GroupTitle>
              <DetailRow><ClockIcon />Sat-Thu: 10:00 - 18:00</DetailRow>
            </Group>
            <Group>
              <GroupTitle>Follow Us</GroupTitle>
              <Socials>
                <SocialLink href="#" aria-label="Facebook" $fill="#3a5185"><FaFacebookF size={16} /></SocialLink>
                <SocialLink href="#" aria-label="Twitter" $fill="#55acee"><FaTwitter size={18} /></SocialLink>
                <SocialLink href="#" aria-label="Instagram"><InstagramIcon /></SocialLink>
                <SocialLink href="#" aria-label="WhatsApp"><WhatsappIcon /></SocialLink>
                <SocialLink href="#" aria-label="YouTube" $width={36}><YoutubeIcon /></SocialLink>
              </Socials>
            </Group>
          </Details>

          <QuestionForm>
            <GroupTitle>Send Your Question</GroupTitle>
            <Field><label htmlFor="name">Your Name</label><TextInput id="name" type="text" /></Field>
            <Field><label htmlFor="email">Your Email</label><TextInput id="email" type="email" /></Field>
            <Field><label htmlFor="message">Your Message</label><MessageInput id="message" /></Field>
            <SendButton type="button">SEND</SendButton>
          </QuestionForm>
        </Card>

        <MapFrame aria-label="Location">
          <ManhattanMap />
          <InfoCard>
            <InfoText>
              <InfoTitle>725 5th Ave</InfoTitle>
              <span>725 5th Ave, New York, NY 10022, USA</span>
              <LargerMapLink href="#">View larger map</LargerMapLink>
            </InfoText>
            <DirectionsLink href="#">
              <svg width="26" height="26" viewBox="0 0 26 26"><path d="M0 3 L3 0 L12 9 L9 14 Z" fill="#b3cbfb" /><path d="M15 0 H26 V11 L22 8 Q16 13 16 18 V26 H9 V18 Q10 10 18 4 Z" fill="#5f93f7" /></svg>
              Directions
            </DirectionsLink>
          </InfoCard>
          <Thumbnail type="button" aria-label="Satellite view">
            <svg width="52" height="52" viewBox="0 0 52 52">
              <rect width="52" height="52" fill="#5a554a" />
              <path d="M0 0 H16 L4 22 L0 30 Z" fill="#8d8270" /><path d="M52 14 L40 28 L34 52 H52 Z" fill="#a08f7b" />
              <path d="M16 0 H26 Q24 14 12 24 Q6 36 8 52 H0 Q0 30 8 20 Z M44 0 H52 V12 Q40 20 34 32 V52 H27 Q26 30 36 18 Z" fill="#1d3426" />
              <path d="M24 8 L34 14 L22 34 L14 46 L16 30 Z" fill="#6b665c" />
            </svg>
          </Thumbnail>
          <ZoomControl>
            <ZoomButton type="button" aria-label="Zoom in"><svg width="25" height="25" viewBox="0 0 25 25" fill="#666"><path d="M10 0 H15 V10 H25 V15 H15 V25 H10 V15 H0 V10 H10 Z" /></svg></ZoomButton>
            <ZoomButton type="button" aria-label="Zoom out"><svg width="25" height="5" viewBox="0 0 25 5" fill="#666"><path d="M0 0 H25 V5 H0 Z" /></svg></ZoomButton>
          </ZoomControl>
          <Attribution>
            <span>Keyboard shortcuts</span><span>Map data ©2022 Google</span><a href="#">Terms of Use</a><a href="#">Report a map error</a>
          </Attribution>
        </MapFrame>
      </Main>
    </>
  );
}
